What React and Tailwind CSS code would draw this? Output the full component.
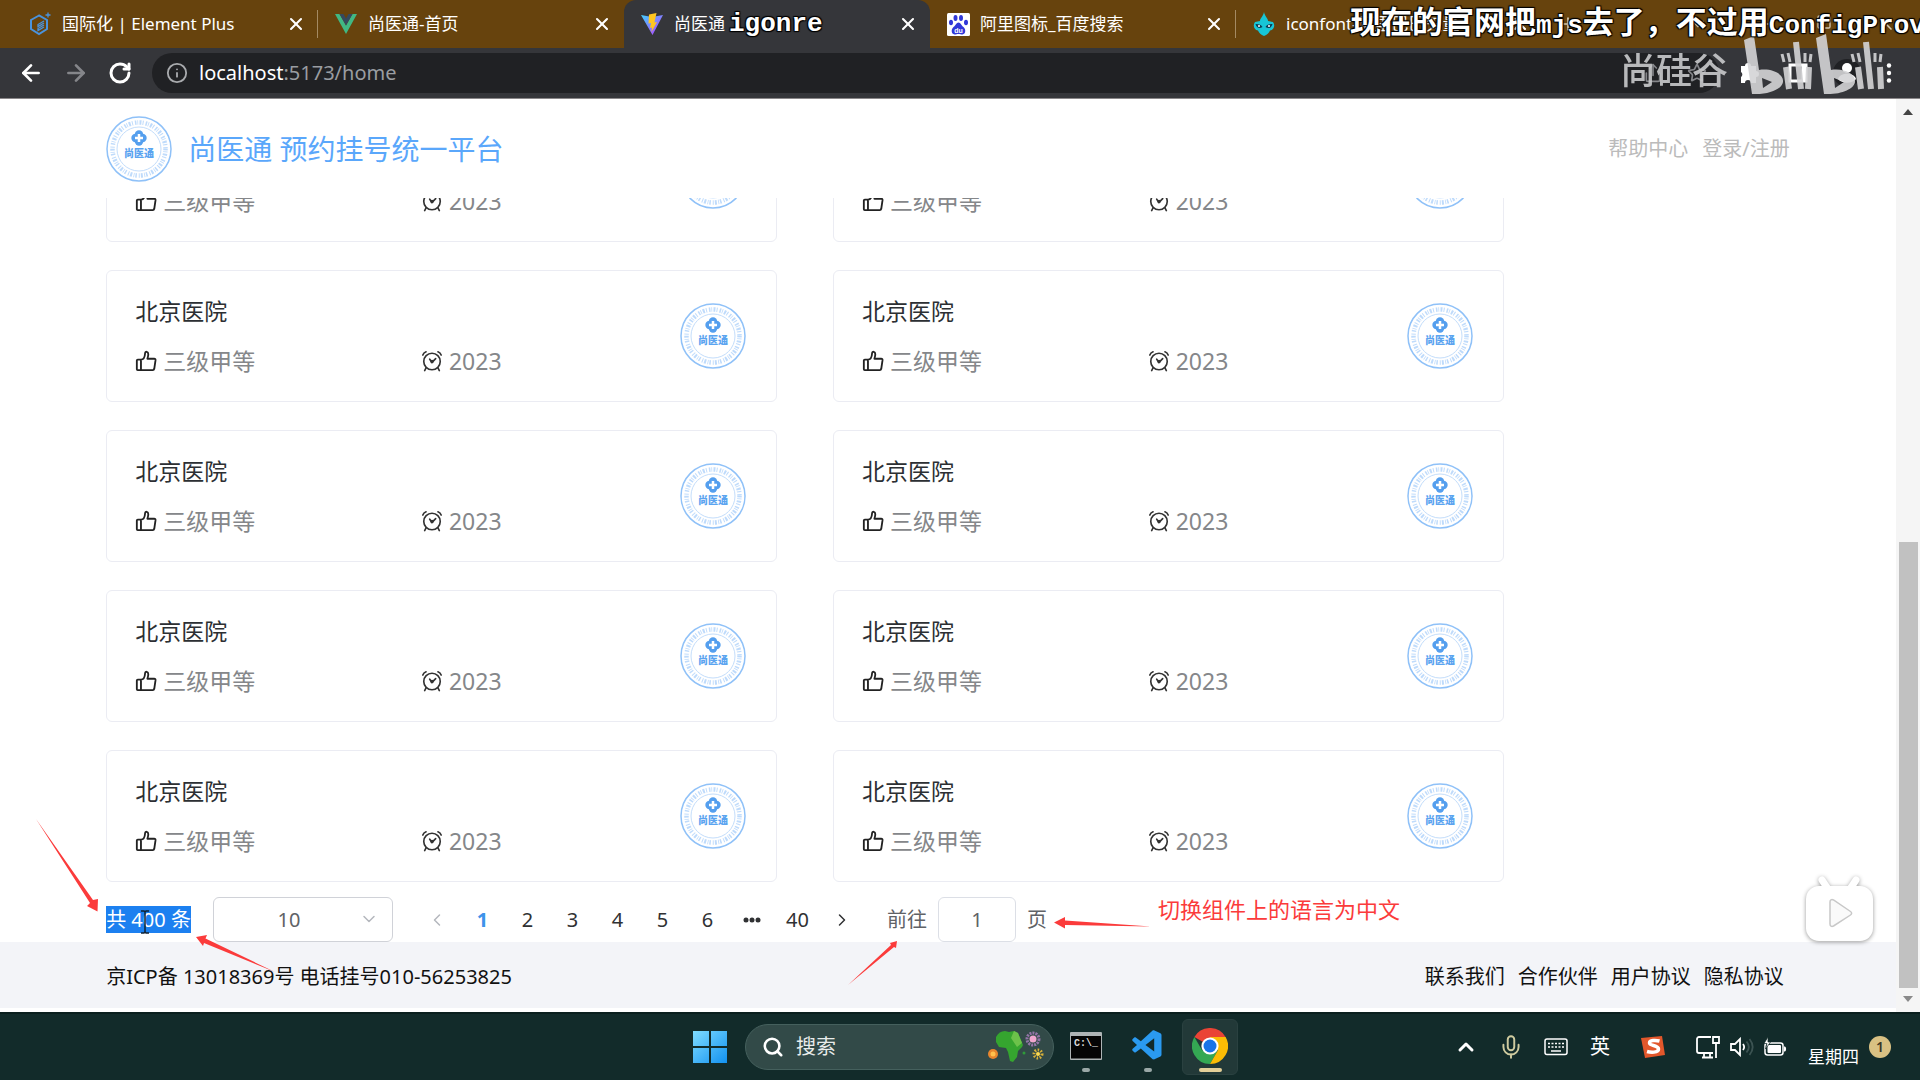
import React from 'react';
import { ArrowLeft, ArrowRight, ChevronDown, ChevronLeft, ChevronRight, ChevronUp, Info, Mic, Minus, Plus, RotateCw, Search, Share, Square, Star, X } from 'lucide-react';
import { VscVscode } from 'react-icons/vsc';

const HOSPITALS = Array.from({ length: 10 }, (_, i) => ({
  id: i + 1,
  name: '北京医院',
  level: '三级甲等',
  time: '2023',
}));

const PAGES = [1, 2, 3, 4, 5, 6];

const FOOTER_LINKS = ['联系我们', '合作伙伴', '用户协议', '隐私协议'];

function ElementIcon() {
  return (
    <svg viewBox="0 0 22 24" className="h-6 w-[22px]" fill="none" stroke="#4a93dd" strokeWidth="2">
      <path d="M10 3.5 2 8v9l8 5 8-5V8z" />
      <path d="m15 9-6 3.5v2L15 11M15 13l-6 3.5v2l6-3.5" strokeWidth="1.3" />
      <path d="M19 .5v5M16.5 3h5" strokeWidth="1.3" />
    </svg>
  );
}

function VueIcon() {
  return (
    <svg viewBox="0 0 22 20" className="h-5 w-[22px]">
      <path fill="#41b883" d="M0 0h4.5L11 11.5 17.5 0H22L11 20z" />
      <path fill="#35495e" d="M4.5 0H8.5L11 4.5 13.5 0h4L11 11.5z" />
    </svg>
  );
}

function ViteIcon() {
  return (
    <svg viewBox="0 0 22 24" className="h-6 w-[22px]">
      <defs>
        <linearGradient id="vite-v" x1="0" y1="0" x2="1" y2="1">
          <stop offset="0" stopColor="#41d1ff" />
          <stop offset="1" stopColor="#bd34fe" />
        </linearGradient>
      </defs>
      <path fill="url(#vite-v)" d="M0 3 11 5l11-2L11.5 23z" />
      <path fill="#ffc61f" d="m15.5 1-7.5 1.5-.5 9 2.500-.5-1 5 2-.6-.5 4.600 5.500-10-2.600.5z" />
    </svg>
  );
}

function BaiduIcon() {
  return (
    <svg viewBox="0 0 23 23" className="h-[23px] w-[23px]">
      <rect width="23" height="23" rx="1.5" fill="#fff" />
      <g fill="#3138d8">
        <ellipse cx="4" cy="9.5" rx="2" ry="2.8" />
        <ellipse cx="8.5" cy="5" rx="2" ry="3" />
        <ellipse cx="14" cy="5" rx="2" ry="3" />
        <ellipse cx="19" cy="9.5" rx="2" ry="2.8" />
        <path d="M11.5 9.5c-2 0-3 3-5 4.500-2.500 2-2.500 7 1 7.500 1.500 0 2.500-.5 4-.5s2.500.5 4 .5c3.500-.5 3.500-5.500 1-7.500-2-1.500-3-4.500-5-4.500z" />
      </g>
      <text x="11.5" y="19.5" textAnchor="middle" fontSize="7" fontWeight="700" fontFamily="Liberation Sans, sans-serif" fill="#fff">du</text>
    </svg>
  );
}

function IconfontIcon() {
  return (
    <svg viewBox="0 0 22 24" className="h-6 w-[22px]">
      <path fill="#17c5d6" d="M11 0c1 5 4 6 4 9l5 1c2.500 3 1 8-3 8.500-1 2.500-3 4.500-6 5.500-3-1-5-3-6-5.500-4-.5-5.500-5.500-3-8.500l5-1c0-3 3-4 4-9z" />
      <path fill="#103c52" d="M2.5 12c4 0 6 1 7 3-3 2-6 1-7-3zM19.500 12c-4 0-6 1-7 3 3 2 6 1 7-3z" />
      <circle cx="6" cy="14" r="1" fill="#fff" />
      <circle cx="16" cy="14" r="1" fill="#fff" />
    </svg>
  );
}

const TABS = [
  { title: '国际化 | Element Plus', icon: <ElementIcon /> },
  { title: '尚医通-首页', icon: <VueIcon /> },
  { title: '尚医通', icon: <ViteIcon />, active: true },
  { title: '阿里图标_百度搜索', icon: <BaiduIcon /> },
  { title: 'iconfont-阿里巴巴矢量', icon: <IconfontIcon /> },
];

function TabStrip() {
  return (
    <div className="flex h-12 items-stretch overflow-hidden bg-[#67430d] pl-3 text-white">
      {TABS.map((tab, i) => (
        <div
          key={tab.title}
          className={
            tab.active
              ? 'flex w-[306px] shrink-0 items-center rounded-t-xl bg-[#35363a] pr-3 pl-4'
              : 'flex w-[306px] shrink-0 items-center pr-3 pl-4'
          }
        >
          <span className="flex w-6 shrink-0 justify-center">{tab.icon}</span>
          <span className="ml-[10px] flex-1 truncate text-[17px] leading-6">{tab.title}</span>
          <button aria-label="关闭标签页" className="flex h-5 w-5 items-center justify-center">
            <X className="h-5 w-5" strokeWidth={2.5} />
          </button>
          {(i === 0 || i === 3) && <span className="-mr-3 ml-[11px] h-7 w-px bg-[#a48a63]" />}
        </div>
      ))}
      <div className="flex flex-1 items-center justify-between pr-6 pl-4 text-[#d8cbb5]">
        <Plus className="h-5 w-5" />
        <div className="flex gap-11">
          <ChevronDown className="h-5 w-5" />
          <Minus className="h-5 w-5" />
          <Square className="h-4 w-4" />
          <X className="h-5 w-5" />
        </div>
      </div>
    </div>
  );
}

function Toolbar() {
  return (
    <div className="flex h-[51px] items-center border-b border-[#8a8789] bg-[#35363a] pl-[18px] text-white">
      <button aria-label="后退" className="w-[45px]">
        <ArrowLeft className="h-[26px] w-[26px]" strokeWidth={2.5} />
      </button>
      <button aria-label="前进" className="w-[45px] text-[#85868a]">
        <ArrowRight className="h-[26px] w-[26px]" strokeWidth={2.5} />
      </button>
      <button aria-label="刷新" className="w-11">
        <RotateCw className="h-6 w-6" strokeWidth={3} />
      </button>
      <div className="flex h-10 flex-1 items-center rounded-full bg-[#202124] pr-3 pl-[14px]">
        <Info className="h-[22px] w-[22px] text-[#a9abae]" />
        <div role="textbox" aria-label="地址" className="ml-[11px] flex-1 text-xl leading-7 text-[#9a9da1]">
          <span className="text-white">localhost</span>:5173/home
        </div>
        <Share className="mr-6 h-5 w-5 text-[#85868a]" />
        <Star className="h-5 w-5 text-[#85868a]" />
      </div>
      <div className="flex w-[201px] items-center justify-between pr-7 pl-5">
        <svg viewBox="0 0 24 24" className="h-6 w-6" fill="#fff">
          <path d="M9 2a3 3 0 0 1 3 3h5v5a3 3 0 1 1 0 6v6h-5a3 3 0 0 0-6 0H2v-6a3 3 0 0 0 0-5V5h4a3 3 0 0 1 3-3z" />
        </svg>
        <svg viewBox="0 0 20 20" className="h-5 w-5" fill="none" stroke="#fff" strokeWidth="3">
          <path d="M2 2h16v16H2zM15 2v16" />
        </svg>
        <svg viewBox="0 0 28 28" className="h-7 w-7">
          <circle cx="14" cy="14" r="14" fill="#202124" />
          <circle cx="14" cy="9" r="5" fill="#fff" />
          <path d="M5 20c2-7 16-7 18 0-4 5-14 5-18 0z" fill="#fff" />
        </svg>
        <svg viewBox="0 0 6 20" className="h-5 w-[6px]" fill="#fff">
          <circle cx="3" cy="2.5" r="2.2" />
          <circle cx="3" cy="10" r="2.2" />
          <circle cx="3" cy="17.5" r="2.2" />
        </svg>
      </div>
    </div>
  );
}

function Logo() {
  return (
    <svg viewBox="0 0 66 66" className="h-[66px] w-[66px] shrink-0" fill="none">
      <circle cx="33" cy="33" r="32" stroke="#8fc1f8" strokeWidth="1.5" />
      <circle cx="33" cy="33" r="26.5" stroke="#a9cffa" strokeWidth="4.5" strokeDasharray="1.5 1 .8 1.4 2 1.2 1 2" strokeOpacity=".75" />
      <circle cx="33" cy="33" r="22" stroke="#c3ddfb" strokeWidth="1" />
      <g fill="#559fee">
        <circle cx="33" cy="18.5" r="4.2" />
        <circle cx="33" cy="25.5" r="4.2" />
        <circle cx="29.5" cy="22" r="4.2" />
        <circle cx="36.5" cy="22" r="4.2" />
      </g>
      <path d="M33 18v8M29 22h8" stroke="#fff" strokeWidth="2.5" />
      <text x="33" y="41" textAnchor="middle" fontSize="10" fontWeight="900" fontFamily="Noto Sans CJK SC, sans-serif" fill="#5ba4f0">尚医通</text>
    </svg>
  );
}

function LikeIcon() {
  return (
    <svg viewBox="0 0 24 24" className="h-[22px] w-[22px]" fill="none" stroke="#222" strokeWidth="2" strokeLinejoin="round">
      <path d="M6.5 10.500H3a1 1 0 0 0-1 1V21a1 1 0 0 0 1 1h3.500zM6.500 10.500c3 0 4.300-3.500 4.500-7 .2-2.500 3.500-2 3.500 1 0 2-.5 3.500-1 5H21c1 0 1.500.6 1.400 1.600l-1.400 9.400c-.2 1-.7 1.500-1.600 1.500H6.500" />
    </svg>
  );
}

function ClockIcon() {
  return (
    <svg viewBox="0 0 24 24" className="h-[22px] w-[22px]" fill="none" stroke="#333" strokeWidth="1.8" strokeLinecap="round">
      <circle cx="12" cy="12.5" r="9" />
      <path d="M2 5.500c.6-1.800 1.600-2.900 3.500-3.500M22 5.500c-.6-1.800-1.600-2.900-3.500-3.500M5.500 19.500 4 22.500M18.500 19.500l1.500 3" />
      <path d="m9.500 10 2.500 3.500 4-4" />
      <circle cx="12" cy="12.500" r="1" fill="#333" />
    </svg>
  );
}

function HospitalCard({ hospital }) {
  return (
    <article className="flex h-[132px] items-center justify-between rounded-md border border-[#ebecf3] bg-white pr-[30px] pl-7">
      <div className="w-[60%]">
        <h2 className="text-[23px] leading-8 text-[#2c2f33]">{hospital.name}</h2>
        <div className="mt-[18px] flex items-center justify-between text-[23px] leading-8 text-[#85878a]">
          <span className="flex items-center gap-[6px]">
            <LikeIcon />
            {hospital.level}
          </span>
          <span className="flex items-center gap-[6px]">
            <ClockIcon />
            {hospital.time}
          </span>
        </div>
      </div>
      <Logo />
    </article>
  );
}

function Pagination() {
  return (
    <nav className="mt-[15px] flex items-center text-xl leading-[27px] text-[#303133]">
      <span className="relative bg-[#1c80f0] text-white">
        共 400 条
        <svg viewBox="0 0 10 24" className="absolute top-1 left-[34px] h-6 w-[10px]" fill="none" stroke="#123" strokeWidth="1.5">
          <path d="M1 1h3l1 1 1-1h3M5 2v20M1 23h3l1-1 1 1h3" />
        </svg>
      </span>
      <div className="relative ml-[22px] w-[180px]">
        <select aria-label="每页条数" defaultValue="10" className="h-[45px] w-full appearance-none rounded-md border border-[#d0d2d8] bg-white pr-7 text-center text-[#606266] [text-align-last:center]">
          <option>10</option>
          <option>20</option>
        </select>
        <ChevronDown className="pointer-events-none absolute top-3 right-[14px] h-5 w-5 text-[#b4b7bd]" strokeWidth={1.8} />
      </div>
      <button aria-label="上一页" className="ml-[22px] flex h-[45px] w-[45px] items-center justify-center text-[#b4b7bd]">
        <ChevronLeft className="h-5 w-5" strokeWidth={1.8} />
      </button>
      {PAGES.map((page) => (
        <button key={page} className={page === 1 ? 'h-[45px] w-[45px] font-bold text-[#3d93ea]' : 'h-[45px] w-[45px]'}>
          {page}
        </button>
      ))}
      <button aria-label="更多页" className="flex h-[45px] w-[45px] items-center justify-center">
        <svg viewBox="0 0 18 6" className="h-[6px] w-[18px]" fill="#303133">
          <circle cx="3" cy="3" r="2.5" />
          <circle cx="9" cy="3" r="2.5" />
          <circle cx="15" cy="3" r="2.5" />
        </svg>
      </button>
      <button className="h-[45px] w-[45px]">40</button>
      <button aria-label="下一页" className="flex h-[45px] w-[45px] items-center justify-center">
        <ChevronRight className="h-5 w-5" strokeWidth={1.8} />
      </button>
      <label className="ml-[22px] flex items-center gap-[11px] text-[#606266]">
        前往
        <input defaultValue="1" className="h-[45px] w-[78px] rounded-md border border-[#dcdfe6] bg-white text-center" />
        页
      </label>
    </nav>
  );
}

function Scrollbar() {
  return (
    <div className="flex w-6 shrink-0 flex-col items-center bg-[#f5f5f5] py-[10px]">
      <span className="border-x-[5px] border-b-[6px] border-x-transparent border-b-[#444]" />
      <span className="flex-1" />
      <span className="mb-2 h-1/2 w-[19px] bg-[#c1c1c1]" />
      <span className="border-x-[5px] border-t-[6px] border-x-transparent border-t-[#8a8a8a]" />
    </div>
  );
}

function Page() {
  return (
    <div className="flex min-h-0 flex-1 bg-white">
      <div className="flex min-w-0 flex-1 flex-col">
        <header className="mx-auto flex h-[99px] w-[88.8%] shrink-0 items-center justify-between">
          <div className="flex items-center gap-4">
            <Logo />
            <h1 className="text-[28px] leading-10 text-[#5aa7fb]">尚医通 预约挂号统一平台</h1>
          </div>
          <div className="flex gap-[14px] text-xl text-[#bbb]">
            <a href="#help">帮助中心</a>
            <a href="#login">登录/注册</a>
          </div>
        </header>
        <main className="mx-auto flex min-h-0 w-[88.8%] flex-1 flex-col justify-end overflow-hidden">
          <div className="grid w-[83%] grid-cols-2 gap-x-14 gap-y-7">
            {HOSPITALS.map((hospital) => (
              <HospitalCard key={hospital.id} hospital={hospital} />
            ))}
          </div>
          <Pagination />
        </main>
        <footer className="mb-1 h-[66px] shrink-0 bg-[#f3f4f8]">
          <div className="mx-auto flex h-full w-[88.8%] items-center justify-between pt-1 text-xl text-[#111]">
            <p>京ICP备 13018369号 电话挂号010-56253825</p>
            <div className="flex gap-[13px] pr-[6px]">
              {FOOTER_LINKS.map((link) => (
                <a key={link} href="#footer">{link}</a>
              ))}
            </div>
          </div>
        </footer>
      </div>
      <Scrollbar />
    </div>
  );
}

function SearchArt() {
  return (
    <svg viewBox="0 0 56 36" className="h-9 w-14">
      <path fill="#35a52f" d="M8 8c2-4 5-6 9-6l4 1 5-1 4 2 5 12-1 2-4 4-1 6-4 5-3-1-2-9-2-4-7-1-3-5z" />
      <path fill="#6cc24a" d="m26 2 4 2 4 10-5 4-6-9z" />
      <circle cx="5" cy="25" r="5" fill="#e8862d" />
      <circle cx="5" cy="25" r="2.5" fill="#ffc14d" />
      <circle cx="45" cy="10" r="6" fill="none" stroke="#9474a8" strokeWidth="3" strokeDasharray="2 1" />
      <circle cx="45" cy="10" r="3.5" fill="#f1a6d0" />
      <circle cx="50" cy="25" r="4" fill="none" stroke="#d8b13a" strokeWidth="3" strokeDasharray="1.5 1.5" />
      <circle cx="50" cy="25" r="2" fill="#ffda4f" />
      <circle cx="36" cy="24" r="1.5" fill="#2f9b3a" />
    </svg>
  );
}

function TerminalIcon() {
  return (
    <svg viewBox="0 0 32 28" className="h-7 w-8">
      <rect width="32" height="28" rx="1" fill="#aeb4b5" />
      <rect x="1" y="4" width="30" height="22.5" fill="#050505" />
      <text x="4" y="14" fontSize="10" fontWeight="700" fontFamily="Liberation Mono, monospace" fill="#ddd">C:\_</text>
    </svg>
  );
}

function ChromeIcon() {
  return (
    <svg viewBox="0 0 36 36" className="h-9 w-9">
      <path fill="#ea4335" d="M18 18 2.4 9A18 18 0 0 1 33.600 9z" />
      <path fill="#34a853" d="M2.4 9A18 18 0 0 0 18 36l7.800-13.500L18 18l-7.800 4.500z" />
      <path fill="#fbbc05" d="M33.6 9H18l7.800 13.500L18 36A18 18 0 0 0 33.600 9z" />
      <circle cx="18" cy="18" r="8.6" fill="#fff" />
      <circle cx="18" cy="18" r="6.5" fill="#1a73e8" />
    </svg>
  );
}

function Taskbar() {
  return (
    <div className="grid h-[68px] shrink-0 grid-cols-[1fr_auto_1fr] items-center border-t-2 border-[#0a1f1e] bg-[#122b2a] text-white">
      <span />
      <div className="flex items-center pl-[11px]">
        <button aria-label="开始" className="mr-[18px]">
          <svg viewBox="0 0 34 34" className="h-[34px] w-[34px]">
            <defs>
              <linearGradient id="win" x1="0" y1="0" x2="1" y2="1">
                <stop offset="0" stopColor="#7fdcff" />
                <stop offset="1" stopColor="#1291f0" />
              </linearGradient>
            </defs>
            <path fill="url(#win)" d="M0 1h16v15H0zM18 1h16v15H18zM0 18h16v15H0zM18 18h16v15H18z" />
          </svg>
        </button>
        <label className="mr-4 flex h-[46px] w-[309px] items-center rounded-full border border-[#45605d] bg-[#324a48] pr-[9px] pl-4">
          <Search className="h-[22px] w-[22px] shrink-0" strokeWidth={2.8} />
          <input placeholder="搜索" aria-label="搜索" className="ml-3 min-w-0 flex-1 bg-transparent text-xl leading-7 placeholder:text-[#e8eceb]" />
          <SearchArt />
        </label>
        <button aria-label="终端" className="flex h-14 w-8 flex-col items-center justify-end gap-2">
          <TerminalIcon />
          <span className="mb-[3px] h-1 w-2 rounded-full bg-[#9aa8a7]" />
        </button>
        <button aria-label="Visual Studio Code" className="mx-7 flex h-14 w-9 flex-col items-center justify-end gap-1">
          <VscVscode className="h-9 w-9 text-[#2a9af0]" />
          <span className="mb-[3px] h-1 w-2 rounded-full bg-[#9aa8a7]" />
        </button>
        <button aria-label="Chrome" className="-ml-3 flex h-14 w-14 flex-col items-center justify-end gap-1 rounded-md border border-[#2a4140] bg-[#223938]">
          <ChromeIcon />
          <span className="mb-[2px] h-1 w-[23px] rounded-full bg-[#e3cf98]" />
        </button>
      </div>
      <div className="flex items-center justify-end pr-[29px]">
        <ChevronUp className="h-6 w-6" strokeWidth={3} />
        <Mic className="ml-5 h-[26px] w-[26px] text-[#cfcb9f]" strokeWidth={1.8} />
        <svg viewBox="0 0 24 18" className="ml-5 h-[18px] w-6" fill="none" stroke="#fff" strokeWidth="1.5">
          <rect x="1" y="1" width="22" height="15.5" rx="2" />
          <path d="M4 5.500h16M4 9h16" strokeDasharray="2 1.5" />
          <path d="M7 13h10" />
        </svg>
        <span className="ml-[22px] text-xl">英</span>
        <svg viewBox="0 0 26 24" className="ml-[30px] h-6 w-[26px]">
          <path fill="#e2572b" d="M1 3 22 1l3 19-20 3z" />
          <path d="M19.5 6c-4-1-10-1-10 2s9 2 9 6-8 3.500-11.500 2.500" fill="none" stroke="#fff" strokeWidth="3.5" />
        </svg>
        <svg viewBox="0 0 24 24" className="ml-[30px] h-6 w-6" fill="none" stroke="#fff" strokeWidth="1.8">
          <path d="M15 2H3a2 2 0 0 0-2 2v12a2 2 0 0 0 2 2h14M8 18v4M14 18v4M6 22.500h11M17 2h6v6h-6zM20 8v15" />
        </svg>
        <svg viewBox="0 0 24 20" className="ml-[10px] h-5 w-6" fill="none" stroke="#fff" strokeWidth="1.8">
          <path d="M1 7v6h4l5 5V2L5 7zM13 7c1.500 2 1.500 4 0 6" />
          <path d="M16.500 4.500c3 3.500 3 7.500 0 11M19.500 2c4 5 4 11 0 16" stroke="#3c5352" />
        </svg>
        <svg viewBox="0 0 24 20" className="ml-[9px] h-5 w-6">
          <rect x="2" y="6" width="18" height="12" rx="2.5" fill="none" stroke="#fff" strokeWidth="1.5" />
          <rect x="4.5" y="8" width="13.5" height="8" rx="1" fill="#fff" />
          <path d="M21 9.500h1c1.500 1 1.500 4 0 5h-1z" fill="#fff" />
          <path d="M5 0 1 6.500h3L2.500 12 7.500 5H5z" fill="#fff" stroke="#122b2a" strokeWidth=".7" />
        </svg>
        <span className="mt-5 ml-[21px] text-[17px] leading-6">星期四</span>
        <span className="ml-[10px] flex h-[22px] w-[22px] items-center justify-center rounded-full bg-[#d9c183] text-sm font-semibold text-[#3a3626]">1</span>
      </div>
    </div>
  );
}

function Watermark() {
  return (
    <div className="pointer-events-none absolute top-[34px] right-9 flex items-center gap-4 text-[#c9cacc] opacity-90">
      <span className="mt-3 text-[36px] leading-[36px] font-medium">尚硅谷</span>
      <svg viewBox="0 0 140 62" className="h-[62px] w-[140px]" fill="#d4d4d6" fillRule="evenodd">
        <path d="M0 6 10 2l5 34c13-2 25 4 24 12-1 7-14 13-31 12zM18 44l1 10 9-6z" />
        <path d="M72 4 82 0l5 36c13-2 25 4 24 12-1 7-14 13-31 12zM90 44l1 10 9-6z" />
        <g fill="none" stroke="#d4d4d6">
          <path d="M42 33l3 22M52 8l5 47M65 33l-1 22M114 33l3 22M122 8l5 47M136 33l1 22" strokeWidth="6" />
          <path d="M38 20l2 8M44 19l2 9M61 19v9M67 20l-1 8M108 20l2 8M114 19l2 9M131 19v9M137 20l-1 8" strokeWidth="3" />
        </g>
      </svg>
    </div>
  );
}

function Danmaku() {
  const outline = 'font-bold text-white [text-shadow:1px_1px_1px_#000,-1px_-1px_1px_#000,1px_-1px_1px_#000,-1px_1px_1px_#000]';
  const mono = "text-[26px] font-['Liberation_Mono',monospace]";
  return (
    <div className={`pointer-events-none absolute inset-x-0 top-0 h-12 overflow-hidden whitespace-nowrap ${outline}`}>
      <span className={`absolute top-[6px] left-[729px] leading-9 ${mono}`}>igonre</span>
      <span className="absolute top-[3px] left-[1350px] text-[31px] leading-9">
        现在的官网把<span className={mono}>mjs</span>去了，不过用<span className={mono}>ConfigProvider</span>
      </span>
    </div>
  );
}

function Annotations() {
  return (
    <div className="pointer-events-none absolute inset-0 overflow-hidden">
      <svg className="absolute top-0 left-0 h-[1080px] w-[1920px]" fill="#fb3b3b">
        <path d="M36 819 93 900l5-1-.5 12.500L87 906l3-3z" />
        <path d="M196 937l11-2-1.500 3.500L275 972l-71-29-1 3z" />
        <path d="M897 941l-1 7-2-1-46 38 43-40-1-2z" />
        <path d="M1054 922.500l11-5.500v3.500l86 6-86-1.500v3.500z" />
      </svg>
      <p className="absolute top-[893px] left-[1158px] text-[22px] leading-8 text-[#fb3b3b]">切换组件上的语言为中文</p>
      <svg viewBox="0 0 76 76" className="absolute top-[872px] left-[1801px] h-[76px] w-[76px] drop-shadow-[0_1px_2px_rgba(0,0,0,0.4)]">
        <path d="m21 8 6 9M55 8l-6 9" stroke="#fff" strokeWidth="7" strokeLinecap="round" />
        <rect x="5" y="14" width="67" height="55" rx="13" fill="#fff" />
        <path d="M29 30c0-2 1.500-3 3.500-2l17 11.500c1.500 1 1.500 2.500 0 3.500l-17 11c-2 1-3.500 0-3.500-2z" fill="#fafafa" stroke="#c8c8c8" strokeWidth="1.5" />
      </svg>
    </div>
  );
}

export default function App() {
  return (
    <div className="relative flex h-screen flex-col overflow-hidden font-['Noto_Sans','Noto_Sans_CJK_SC',sans-serif]">
      <TabStrip />
      <Toolbar />
      <Page />
      <Taskbar />
      <Watermark />
      <Danmaku />
      <Annotations />
    </div>
  );
}
